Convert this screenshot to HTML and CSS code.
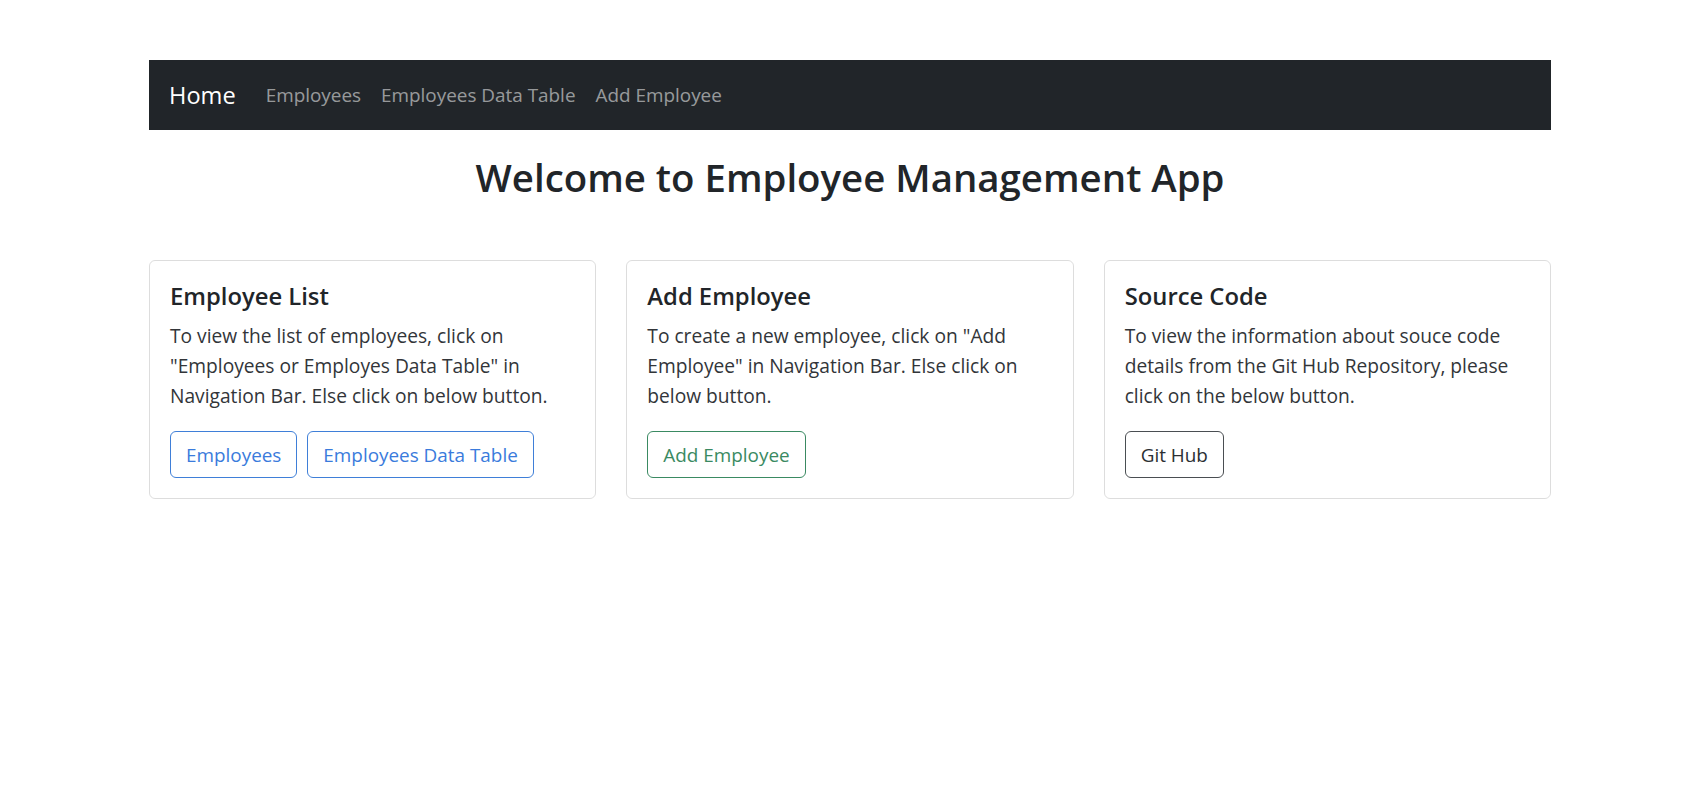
FILE: index.html
```html
<!DOCTYPE html>
<html lang="en">
<head>
<meta charset="utf-8">
<title>Employee Management App</title>
<link rel="stylesheet" href="styles.css">
</head>
<body>
<div class="page">
  <nav class="navbar">
    <a class="brand" href="#">Home</a>
    <div class="nav-links">
      <a class="nav-link" href="#">Employees</a>
      <a class="nav-link" href="#">Employees Data Table</a>
      <a class="nav-link" href="#">Add Employee</a>
    </div>
  </nav>
  <h1 class="welcome">Welcome to Employee Management App</h1>
  <div class="cards">
    <div class="card">
      <h5 class="card-title">Employee List</h5>
      <p class="card-text">To view the list of employees, click on "Employees or Employes Data Table" in Navigation Bar. Else click on below button.</p>
      <div class="actions">
        <a class="btn btn-primary" href="#">Employees</a>
        <a class="btn btn-primary" href="#">Employees Data Table</a>
      </div>
    </div>
    <div class="card">
      <h5 class="card-title">Add Employee</h5>
      <p class="card-text">To create a new employee, click on "Add Employee" in Navigation Bar. Else click on below button.</p>
      <div class="actions">
        <a class="btn btn-success" href="#">Add Employee</a>
      </div>
    </div>
    <div class="card">
      <h5 class="card-title">Source Code</h5>
      <p class="card-text">To view the information about souce code details from the Git Hub Repository, please click on the below button.</p>
      <div class="actions">
        <a class="btn btn-dark" href="#">Git Hub</a>
      </div>
    </div>
  </div>
</div>
</body>
</html>
```
FILE: styles.css
```css
* { box-sizing: border-box; }
html, body { margin: 0; padding: 0; background: #fff; }
body {
  font-family: "Open Sans", "Noto Sans", sans-serif;
  color: #212529;
  font-size: 19.2px;
  line-height: 30px;
}
a { text-decoration: none; }
.page {
  width: 1402px;
  margin: 60px auto 0;
}
.navbar {
  display: flex;
  align-items: center;
  background: #212529;
  padding: 10px 20px;
  height: 70px;
}
.brand {
  color: #fff;
  font-size: 23.6px;
  line-height: 50px;
  margin-right: 20px;
}
.nav-links { display: flex; }
.nav-link {
  color: rgba(255,255,255,.55);
  padding: 0 10px;
  font-size: 18.9px;
}
.welcome {
  margin: 23px 0 59px;
  text-align: center;
  font-size: 38.4px;
  line-height: 48px;
  font-weight: 600;
  color: #212529;
}
.cards {
  display: grid;
  grid-template-columns: repeat(3, 1fr);
  gap: 30px;
}
.card {
  border: 1px solid rgba(0,0,0,.135);
  border-radius: 6px;
  padding: 20px;
}
.card-title {
  margin: 0 0 10px;
  font-size: 23.8px;
  line-height: 30px;
  font-weight: 600;
  color: #212529;
}
.card-text { margin: 0 0 20px; color: #323539; }
.actions { display: flex; gap: 10px; }
.btn {
  display: inline-block;
  border: 1px solid;
  border-radius: 6px;
  padding: 7.5px 15px;
  line-height: 30px;
  font-size: 18.9px;
}
.btn-primary { color: #3a7bdc; border-color: #3f7fd8; }
.btn-success { color: #3a8a62; border-color: #3a8a62; }
.btn-dark { color: #2b2f33; border-color: #4a4e52; }
```
